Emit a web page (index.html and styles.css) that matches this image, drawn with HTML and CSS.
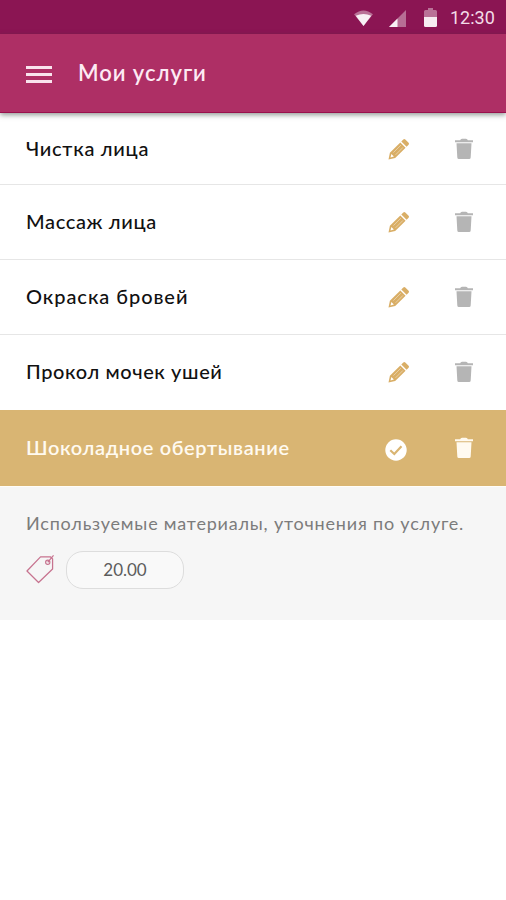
FILE: index.html
```html
<!DOCTYPE html>
<html lang="ru">
<head>
<meta charset="utf-8">
<title>Мои услуги</title>
<link rel="stylesheet" href="styles.css">
</head>
<body>
<svg width="0" height="0" class="defs" aria-hidden="true">
  <symbol id="pencil" viewBox="0 0 22 22">
    <path fill="currentColor" fill-rule="evenodd" d="M.5 21.500l1.400-6.700L12.300 4.400l5.300 5.300L7.200 20.100zM2.500 19.500l3.400-.9-2.500-2.500zM13.300 3.400l2-2q1-.9 2 0l3.300 3.300q.9 1 0 2L18.600 8.700z"/>
    <path d="M5.400 14.600l7.400-7.400M7.600 16.800l7.400-7.400" stroke="#fff" stroke-width=".7" opacity=".6"/>
  </symbol>
  <symbol id="trash" viewBox="0 0 18 22">
    <path fill="currentColor" d="M0 2.300h5.200Q5.500.7 7 .7h4q1.500 0 1.800 1.600H18v2H0zM1.500 5.300h15l-.8 14.100q-.1 1.600-1.600 1.600H3.900q-1.500 0-1.600-1.600z"/>
  </symbol>
</svg>

<div class="status">
  <svg class="wifi" viewBox="0 0 20 18"><path fill="#fff" opacity=".4" d="M0 4.500Q10-3.500 20 4.500L10 17z"/><path fill="#fff" opacity=".9" d="M1.800 6Q10 2.500 18.200 6L10 17z"/></svg>
  <svg class="signal" viewBox="0 0 18 18"><path fill="#fff" opacity=".38" d="M18 0v18H0z"/><path fill="#fff" opacity=".9" d="M9 9v9H0z"/></svg>
  <svg class="battery" viewBox="0 0 13 19"><path fill="#fff" opacity=".4" d="M0 9V3.500Q0 2 1.500 2H4V0h5v2h2.500Q13 2 13 3.500V9z"/><path fill="#fff" opacity=".92" d="M0 9h13v8.500q0 1.500-1.500 1.500h-10Q0 19 0 17.500z"/></svg>
  <span class="clock">12:30</span>
</div>

<header class="bar">
  <div class="menu"><i></i><i></i><i></i></div>
  <h1>Мои услуги</h1>
</header>

<main>
  <ul class="list">
    <li class="row first"><span class="name n1">Чистка лица</span><svg class="edit"><use href="#pencil"/></svg><svg class="del"><use href="#trash"/></svg></li>
    <li class="row"><span class="name n2">Массаж лица</span><svg class="edit"><use href="#pencil"/></svg><svg class="del"><use href="#trash"/></svg></li>
    <li class="row"><span class="name n3">Окраска бровей</span><svg class="edit"><use href="#pencil"/></svg><svg class="del"><use href="#trash"/></svg></li>
    <li class="row last"><span class="name n4">Прокол мочек ушей</span><svg class="edit"><use href="#pencil"/></svg><svg class="del"><use href="#trash"/></svg></li>
    <li class="row active"><span class="name n5">Шоколадное обертывание</span><svg class="check" viewBox="0 0 22 22"><circle cx="11" cy="11" r="10.700" fill="#fff"/><path d="M5.300 11.300l4 3.700 7.200-7.700" fill="none" stroke="#d9b573" stroke-width="2.200"/></svg><svg class="del"><use href="#trash"/></svg></li>
  </ul>
  <section class="details">
    <p>Используемые материалы, уточнения по услуге.</p>
    <div class="price">
      <svg class="tag" viewBox="0 0 30 30"><path d="M1 16.500L15 2h10.500l2 2v10.500L13 28.500z" fill="none" stroke="#c7738f" stroke-width="1.300" stroke-linejoin="round"/><circle cx="22.500" cy="7.500" r="2.200" fill="none" stroke="#c7738f" stroke-width="1.200"/><path d="M22.500 7.500L28.500.5" stroke="#c7738f" stroke-width="1.200"/></svg>
      <span class="amount">20.00</span>
    </div>
  </section>
</main>
</body>
</html>
```
FILE: styles.css
```css
* { box-sizing: border-box; }
body { margin: 0; background: #fff; font-family: Lato, "Noto Sans", sans-serif; color: #111; }
.defs { display: block; }
svg { flex: none; }
.status { height: 34px; background: #8b1553; display: flex; align-items: center; padding: 2px 11px 0 354px; }
.wifi { width: 19px; height: 17px; }
.signal { width: 17px; height: 17px; margin-left: 16px; }
.battery { width: 13px; height: 19px; margin: -1px 0 0 18px; }
.clock { margin-left: 13px; font: 18px/24px Roboto, sans-serif; color: #f3dce8; }
.bar { position: relative; height: 79px; background: #ae2f65; border-bottom: 1px solid #99104d; box-shadow: 0 2px 5px rgba(40, 60, 50, .5); display: flex; align-items: center; padding: 1px 26px 0; }
.menu { width: 26px; display: grid; gap: 4px; padding-top: 2px; }
.menu i { height: 3px; background: #f9e3ed; }
h1 { margin: -2px 0 0 26px; font-size: 22px; line-height: 28px; font-weight: 600; letter-spacing: .95px; color: #fdeaf3; white-space: nowrap; }
.list { list-style: none; margin: 0; padding: 0; }
.row { height: 75px; border-bottom: 1px solid #e6e6e6; display: flex; align-items: center; padding: 0 33px 0 26px; }
.first { height: 72px; }
.last { border-bottom-color: #fff; }
.name { flex: 1; font-size: 20px; line-height: 26px; font-weight: 500; white-space: nowrap; margin-top: -2px; }
.n1 { letter-spacing: .7px; }
.n2 { letter-spacing: .65px; }
.n3 { letter-spacing: .95px; }
.n4 { letter-spacing: .6px; }
.n5 { letter-spacing: .62px; }
.edit { width: 22px; height: 22px; color: #d9ae66; margin-right: 45px; }
.del { width: 18px; height: 22px; color: #b5b5b5; }
.active { height: 76px; background: #d9b573; border: 0; color: #fffaf0; }
.active .name { font-weight: 600; }
.active .del { color: #fffaf0; }
.check { width: 22px; height: 22px; margin: 3px 48px 0 0; }
.details { height: 134px; background: #f6f6f6; border-top: 1px solid #fffdf8; padding: 23px 26px 0; color: #7c7c7c; }
.details p { margin: 0; font-size: 18px; line-height: 26px; letter-spacing: .8px; white-space: nowrap; }
.price { display: flex; align-items: center; margin-top: 15px; }
.tag { width: 29px; height: 29px; margin-top: -1px; }
.amount { width: 118px; height: 38px; margin-left: 11px; border: 1px solid #ddd; border-radius: 17px; background: #f9f9f9; color: #5c5c5c; font-size: 17px; line-height: 35px; text-align: center; }
```
